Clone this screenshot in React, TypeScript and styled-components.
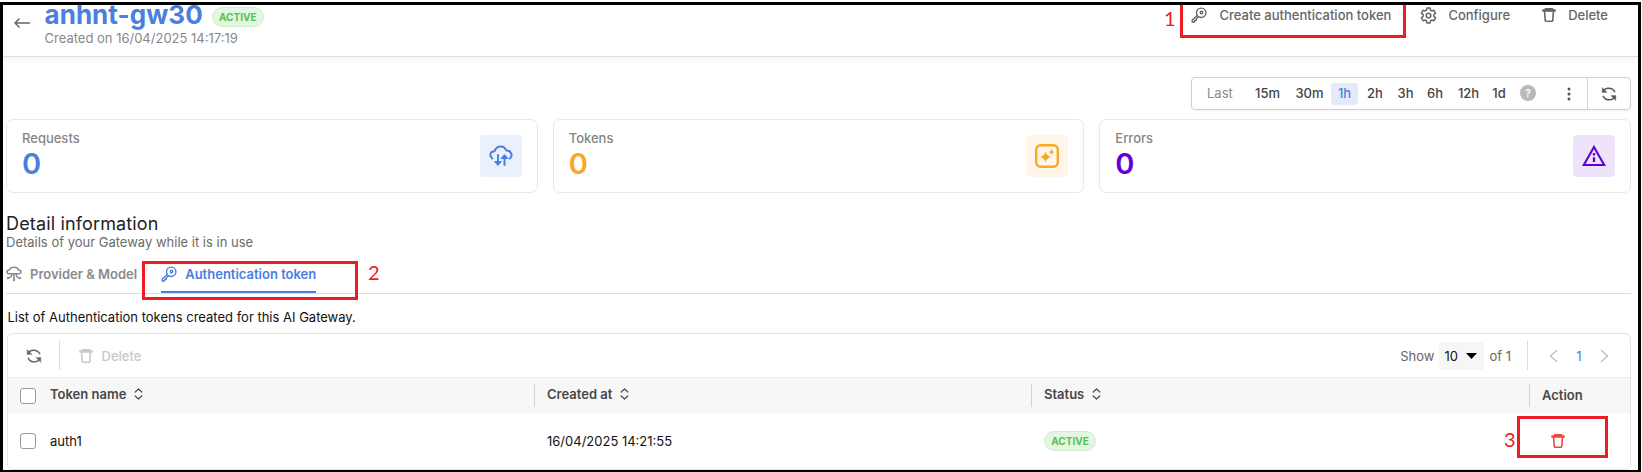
import React from "react";
import styled, { createGlobalStyle } from "styled-components";

const Global = createGlobalStyle`
  *{box-sizing:border-box}
  body{margin:0;background:#fff;font-family:Inter,"Liberation Sans",sans-serif;font-size:13px;line-height:16px;color:#111}
`;

const Frame = styled.div`
  position: relative; width: 1641px; height: 470px; margin-top: 2px;
  border: 3px solid #000; border-bottom-width: 2px; overflow: hidden; background: #fff;
`;
const Header = styled.header`
  height: 52px; display: flex; align-items: flex-start; padding: 0 30px 0 10px;
  border-bottom: 1px solid #dedede; box-shadow: 0 3px 7px rgba(0,0,0,.05);
`;
const BackButton = styled.span`display: flex; margin: 11px 14px 0 0; color: #666;`;
const Heading = styled.div`flex: 1; height: 46px;`;
const TitleRow = styled.div`display: flex; align-items: center; height: 26px; gap: 9px; margin-top: -1px;`;
const Title = styled.h1`margin: -4px 0 0 -.5px; font-size: 26px; line-height: 30px; font-weight: 700; letter-spacing: .05px; color: #4a7ee0;`;
const Created = styled.div`margin-left: -.5px; color: #888; line-height: 16px;`;
const Badge = styled.span`
  display: inline-flex; align-items: center; justify-content: center; width: 52px; height: 20px;
  border: 1px solid #cfeecb; border-radius: 10px; background: #e4f5e2; color: #55c24d;
  font-size: 10px; font-weight: 700;
`;
const Actions = styled.div`display: flex; padding-top: 1px; color: #666;`;
const Action = styled.span<{ $gap: number; $after?: number }>`
  display: flex; align-items: center; gap: ${p => p.$gap}px; height: 18px; margin-right: ${p => p.$after ?? 0}px;
  font-weight: 500; color: #666; white-space: nowrap;
`;
const Content = styled.main`padding: 20px 7px 0 3px;`;
const RangeBar = styled.div`
  display: flex; align-items: center; width: 440px; height: 33px; margin-left: auto; padding: 0 0 0 15px;
  border: 1px solid #cfcfcf; border-radius: 4px; box-shadow: 0 1px 3px rgba(0,0,0,.05);
`;
const RangeLabel = styled.span`width: 40px; margin-top: -1px; color: #8b8b8b;`;
const Range = styled.span<{ $w: number; $on?: boolean }>`
  display: flex; align-items: center; justify-content: center; width: ${p => p.$w}px; height: 22px; padding-bottom: 1px; border-radius: 3px;
  font-weight: 500; color: ${p => (p.$on ? "#4a7ee0" : "#444")}; background: ${p => (p.$on ? "#e3ebfa" : "none")};
`;
const Help = styled.span`
  display: flex; align-items: center; justify-content: center; width: 16px; height: 16px; margin: -1px 0 0 8px;
  border-radius: 50%; background: #b9b9b9; color: #fff; font-size: 10px; font-weight: 700;
`;
const More = styled.span`display: flex; width: 51px; justify-content: flex-end; padding-right: 16px;`;
const RangeRefresh = styled.span`display: flex; flex: 1; height: 31px; align-items: center; justify-content: center; border-left: 1px solid #d4d4d4; color: #555;`;
const Cards = styled.section`display: grid; grid-template-columns: repeat(3, 1fr); gap: 15px; margin-top: 9px;`;
const Card = styled.div`
  display: flex; justify-content: space-between; height: 74px; padding: 10px 15px 0;
  border: 1px solid #e8e8e8; border-radius: 7px;
`;
const CardLabel = styled.div`color: #858585; font-weight: 500; line-height: 16px;`;
const CardValue = styled.div<{ $c: string }>`margin-top: 1px; color: ${p => p.$c}; font-size: 29px; line-height: 34px; font-weight: 600;`;
const IconTile = styled.div<{ $c: string; $bg: string }>`
  display: flex; align-items: center; justify-content: center; width: 42px; height: 42px; margin-top: 5px;
  border-radius: 4px; color: ${p => p.$c}; background: ${p => p.$bg};
`;
const SectionTitle = styled.h2`margin: 20px 0 0; font-size: 18px; line-height: 22px; font-weight: 400; letter-spacing: .15px; color: #222;`;
const SectionSub = styled.div`margin-top: -1px; line-height: 16px; color: #6b6b6b;`;
const Tabs = styled.nav`display: flex; gap: 24px; height: 32px; margin-top: 12px; border-bottom: 1px solid #dedede;`;
const Tab = styled.span<{ $on?: boolean }>`
  display: flex; gap: 8px; height: 31px; padding-bottom: 6px; align-items: center;
  font-weight: 600; color: ${p => (p.$on ? "#4a7ee0" : "#8a8a8a")};
  border-bottom: 2px solid ${p => (p.$on ? "#4a7ee0" : "transparent")};
`;
const Note = styled.p`margin: 15px 0 8px 1.5px; line-height: 16px; color: #111;`;
const Panel = styled.section`height: 137px; margin-left: 1px; border: 1px solid #e4e4e4; border-radius: 6px; overflow: hidden;`;
const Toolbar = styled.div`display: flex; align-items: center; height: 43px; padding: 0 21px 0 18px; color: #666;`;
const Divider = styled.span<{ $l: number; $r: number }>`width: 1px; height: 29px; margin: 0 ${p => p.$r}px 0 ${p => p.$l}px; background: #dcdcdc;`;
const DeleteButton = styled.span`display: flex; align-items: center; gap: 8.5px; flex: 1; font-weight: 500; color: #c8c8c8;`;
const PageSize = styled.span`
  display: flex; align-items: center; gap: 8px; width: 45px; height: 28px; margin: 0 5px 0 5px; padding-left: 5px;
  border-radius: 3px; background: #f6f6f6; color: #111;
`;
const PageNumber = styled.span`width: 42px; text-align: center; color: #4a7ee0;`;
const Row = styled.div<{ $head?: boolean }>`
  display: grid; grid-template-columns: 42px 484px 497px 498px 1fr; align-items: center;
  height: ${p => (p.$head ? 36 : 55)}px; background: ${p => (p.$head ? "#f7f7f7" : "#fff")};
  border-top: ${p => (p.$head ? "1px solid #ebebeb" : "0")};
`;
const Check = styled.span<{ $drop?: number }>`width: 16px; height: 16px; margin: ${p => p.$drop ?? 0}px 0 0 12px; border: 1px solid #999; border-radius: 3px; background: #fff;`;
const HeadCell = styled.span<{ $line?: boolean; $drop?: number }>`
  display: flex; align-items: center; gap: 8px; height: 23px; font-weight: 600; color: #484848;
  padding-left: ${p => (p.$line ? 12 : 0)}px; border-left: ${p => (p.$line ? "1px solid #d2d2d2" : "0")};
  span { margin-top: ${p => p.$drop ?? -3}px; }
  svg { margin-top: -3px; }
`;
const Cell = styled.span<{ $pad?: number; $danger?: boolean }>`
  display: flex; align-items: center; padding-left: ${p => p.$pad ?? 0}px; color: ${p => (p.$danger ? "#f4473c" : "inherit")};
`;
const Mark = styled.div<{ $x: number; $y: number; $w: number; $h: number }>`
  position: absolute; left: ${p => p.$x}px; top: ${p => p.$y}px; width: ${p => p.$w}px; height: ${p => p.$h}px;
  border: 3px solid #ed1c24;
`;
const MarkNumber = styled.span<{ $x: number; $y: number }>`
  position: absolute; left: ${p => p.$x}px; top: ${p => p.$y}px; font: 20px/22px Lato, sans-serif; color: #ed1c24;
`;

const line = { fill: "none", stroke: "currentColor", strokeLinecap: "round", strokeLinejoin: "round" } as const;

const KeyIcon = () => (
  <svg width="16" height="16" viewBox="0 0 16 16" {...line} strokeWidth="1.4">
    <circle cx="10.2" cy="5.8" r="4.7" /><circle cx="10.5" cy="5.5" r="1.2" />
    <path d="M6.3 8.5 1.2 13V15H3.6V13.4H5.2V12L7.6 9.8" />
  </svg>
);
const GearIcon = () => (
  <svg width="17" height="17" viewBox="0 0 24 24" {...line} strokeWidth="2.1">
    <path d="M9.7 1.5h4.6l.6 3.1 1.8 1 3-1 2.3 4-2.4 2.1v2.6l2.4 2.1-2.3 4-3-1-1.8 1-.6 3.1H9.7l-.6-3.1-1.8-1-3 1-2.3-4 2.4-2.1v-2.6L2 8.6l2.3-4 3 1 1.8-1z" />
    <circle cx="12" cy="12" r="3.3" />
  </svg>
);
const TrashIcon = () => (
  <svg width="14" height="14" viewBox="0 0 14 14" {...line}>
    <path d="M.3 2.5H13.7" strokeWidth="2.6" strokeLinecap="butt" /><path d="M3.5 1H10.5" strokeWidth="1.8" />
    <path d="M2.6 3.5 3.2 12.3Q3.3 13.2 4.2 13.2H9.8Q10.7 13.2 10.8 12.3L11.4 3.5" strokeWidth="1.6" />
  </svg>
);
const RefreshIcon = () => (
  <svg width="16" height="16" viewBox="0 0 16 16" {...line} strokeWidth="1.5">
    <path d="M2 5.8C4 1.2 11 .7 13.7 5.7" /><path d="M14 10.2C12 14.8 5 15.3 2.3 10.3" />
    <path d="M1.3 2V6.3H5.6Z" fill="currentColor" strokeWidth=".6" /><path d="M14.7 14V9.7H10.4Z" fill="currentColor" strokeWidth=".6" />
  </svg>
);
const SortIcon = () => (
  <svg width="9" height="12" viewBox="0 0 9 12" {...line} strokeWidth="1.2"><path d="M1.2 4 4.5 1 7.8 4M1.2 8 4.5 11 7.8 8" /></svg>
);
const ModelIcon = () => (
  <svg width="16" height="16" viewBox="0 0 16 16" {...line} strokeWidth="1.5">
    <path d="M3.3 7.8C.2 7.8.2 4 3.4 4 4.5.2 11.5.2 12.6 4 15.8 4 15.8 7.8 12.7 7.8Z" />
    <path d="M8 8V14M5.6 8V9.5Q5.6 11 2.2 12M10.4 8V9.5Q10.4 11 13.8 12" />
    <path d="M8 14V14.2M2 12V12.2M14 12V12.2" strokeWidth="2.2" />
  </svg>
);
const CloudIcon = () => (
  <svg width="24" height="22" viewBox="0 0 24 22" {...line} strokeWidth="2">
    <path d="M3.2 13.5C-.2 10.5 1.5 6.3 5.5 6.2 8-.3 15.5.2 17.2 5.5 22.2 5.2 24.2 10.5 20.8 13.5" />
    <path d="M9 10V19M15.5 20V11" />
    <path d="M5.8 16.5 9 20 12 16.5ZM12.3 13.5 15.5 10 18.7 13.5Z" fill="currentColor" strokeWidth="1.2" />
  </svg>
);
const SparkIcon = () => (
  <svg width="24" height="24" viewBox="0 0 24 24" {...line} strokeWidth="2.4">
    <rect x="1.2" y="1.2" width="21.6" height="21.6" rx="4.5" />
    <path d="M10.5 7.8Q11.7 11.8 15.8 13 11.7 14.2 10.5 18.2 9.3 14.2 5.2 13 9.3 11.8 10.5 7.8ZM16.5 5Q17.2 7.3 19.2 8 17.2 8.7 16.5 10.7 15.8 8.7 13.8 8 15.8 7.3 16.5 5Z" fill="currentColor" stroke="none" />
  </svg>
);
const WarningIcon = () => (
  <svg width="24" height="22" viewBox="0 0 24 22" fill="none" stroke="currentColor" strokeWidth="2.1">
    <path d="M12 2 22.2 20H1.8Z" /><path d="M12 8V10.5M12 12.3V17" strokeWidth="2.3" />
  </svg>
);
const Chevron = ({ d }: { d: string }) => (
  <svg width="9" height="14" viewBox="0 0 9 14" {...line} stroke="#c2c2c2" strokeWidth="1.5"><path d={d} /></svg>
);

const stats = [
  { label: "Requests", color: "#4a7ee0", bg: "#eaf1fc", icon: <CloudIcon /> },
  { label: "Tokens", color: "#f9a825", bg: "#fff5e8", icon: <SparkIcon /> },
  { label: "Errors", color: "#6200d6", bg: "#ede3fa", icon: <WarningIcon /> },
];
const ranges: [string, number][] = [["15m", 41], ["30m", 43], ["1h", 27], ["2h", 34], ["3h", 27], ["6h", 32], ["12h", 35], ["1d", 26]];

export default function App() {
  return (
    <>
      <Global />
      <Frame>
        <Header>
          <BackButton>
            <svg width="18" height="14" viewBox="0 0 18 14" {...line} strokeWidth="1.5"><path d="M16.5 7H2M6 3 2 7 6 11" /></svg>
          </BackButton>
          <Heading>
            <TitleRow><Title>anhnt-gw30</Title><Badge>ACTIVE</Badge></TitleRow>
            <Created>Created on 16/04/2025 14:17:19</Created>
          </Heading>
          <Actions>
            <Action $gap={12} $after={29}><KeyIcon />Create authentication token</Action>
            <Action $gap={11} $after={32}><GearIcon />Configure</Action>
            <Action $gap={12}><TrashIcon />Delete</Action>
          </Actions>
        </Header>
        <Content>
          <RangeBar>
            <RangeLabel>Last</RangeLabel>
            {ranges.map(([r, w]) => <Range key={r} $w={w} $on={r === "1h"}>{r}</Range>)}
            <Help>?</Help>
            <More><svg width="4" height="14" fill="#555"><circle cx="2" cy="2" r="1.5" /><circle cx="2" cy="7" r="1.5" /><circle cx="2" cy="12" r="1.5" /></svg></More>
            <RangeRefresh><RefreshIcon /></RangeRefresh>
          </RangeBar>
          <Cards>
            {stats.map(s => (
              <Card key={s.label}>
                <div><CardLabel>{s.label}</CardLabel><CardValue $c={s.color}>0</CardValue></div>
                <IconTile $c={s.color} $bg={s.bg}>{s.icon}</IconTile>
              </Card>
            ))}
          </Cards>
          <SectionTitle>Detail information</SectionTitle>
          <SectionSub>Details of your Gateway while it is in use</SectionSub>
          <Tabs>
            <Tab><ModelIcon />Provider &amp; Model</Tab>
            <Tab $on><KeyIcon />Authentication token</Tab>
          </Tabs>
          <Note>List of Authentication tokens created for this AI Gateway.</Note>
          <Panel>
            <Toolbar>
              <RefreshIcon />
              <Divider $l={17} $r={19} />
              <DeleteButton><TrashIcon />Delete</DeleteButton>
              <span>Show</span>
              <PageSize>10<svg width="11" height="6"><path d="M0 0H11L5.5 6Z" /></svg></PageSize>
              <span>of 1</span>
              <Divider $l={16} $r={21} />
              <Chevron d="M7.5 1.5 1.5 7 7.5 12.5" />
              <PageNumber>1</PageNumber>
              <Chevron d="M1.5 1.5 7.5 7 1.5 12.5" />
            </Toolbar>
            <Row $head>
              <Check $drop={1} />
              <HeadCell><span>Token name</span><SortIcon /></HeadCell>
              <HeadCell $line><span>Created at</span><SortIcon /></HeadCell>
              <HeadCell $line><span>Status</span><SortIcon /></HeadCell>
              <HeadCell $line $drop={-1}><span>Action</span></HeadCell>
            </Row>
            <Row>
              <Check />
              <Cell>auth1</Cell>
              <Cell $pad={13}>16/04/2025 14:21:55</Cell>
              <Cell $pad={13}><Badge>ACTIVE</Badge></Cell>
              <Cell $pad={22} $danger><TrashIcon /></Cell>
            </Row>
          </Panel>
        </Content>
        <MarkNumber $x={1161} $y={2}>1</MarkNumber>
        <Mark $x={1177} $y={-4} $w={226} $h={37} />
        <MarkNumber $x={365} $y={256}>2</MarkNumber>
        <Mark $x={139} $y={256} $w={216} $h={39} />
        <MarkNumber $x={1501} $y={423}>3</MarkNumber>
        <Mark $x={1514} $y={411} $w={91} $h={42} />
      </Frame>
    </>
  );
}
